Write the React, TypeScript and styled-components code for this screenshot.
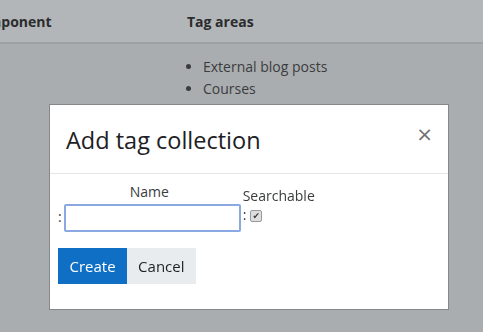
import React from "react";
import styled, {createGlobalStyle} from "styled-components";

const GlobalStyle = createGlobalStyle`
  html, body {
    margin: 0;
    padding: 0;
    background: #aaadaf;
  }
  body {
    font-family: "Open Sans", "Noto Sans", sans-serif;
    color: #2b2d2f;
  }
`;

const Page = styled.div`
  position: relative;
  width: 483px;
  height: 332px;
  overflow: hidden;
  background: #aaadaf;
`;

const Table = styled.table`
  border-collapse: collapse;
  margin-left: -30px;
  width: 600px;
`;

const HeadCell = styled.th<{w: number}>`
  height: 42px;
  padding: 0;
  text-align: left;
  font-size: 14px;
  font-weight: 700;
  color: #2a2c2e;
  background: #b3b6b8;
  border-bottom: 2px solid #9ea1a3;
  width: ${(p) => p.w}px;
`;

const BodyCell = styled.td`
  vertical-align: top;
  padding: 12px 0 0 0;
  font-size: 14px;
`;

const AreaList = styled.ul`
  margin: 0;
  padding-left: 16px;
  line-height: 22px;
  color: #3a3c3e;
`;

const Dialog = styled.div`
  position: absolute;
  left: 49px;
  top: 104px;
  width: 398px;
  background: #fff;
  border: 1px solid #85888a;
`;

const DialogHeader = styled.div`
  display: flex;
  align-items: flex-start;
  justify-content: space-between;
  height: 68px;
  padding: 0 16px;
  border-bottom: 1px solid #e3e5e7;
`;

const Title = styled.h2`
  margin: 19px 0 0 0;
  font-size: 23.5px;
  font-weight: 400;
  color: #1d2125;
`;

const Close = styled.button`
  margin-top: 19px;
  margin-right: -1px;
  border: 0;
  background: none;
  padding: 0;
  font-size: 20px;
  line-height: 1;
  color: #6f7173;
  font-family: "DejaVu Sans", sans-serif;
`;

const DialogBody = styled.div`
  padding: 9px 8px 0 8px;
`;

const FieldRow = styled.div`
  display: flex;
  align-items: flex-start;
  font-size: 14px;
  color: #3a3c3e;
`;

const Field = styled.div<{center?: boolean}>`
  display: flex;
  flex-direction: column;
  align-items: ${(p) => (p.center ? "center" : "flex-start")};
  padding-top: ${(p) => (p.center ? 0 : 4)}px;
  margin-right: ${(p) => (p.center ? 2 : 0)}px;
`;

const Label = styled.label`
  line-height: 18px;
`;

const Inline = styled.div`
  display: flex;
  align-items: center;
  gap: 1px;
`;

const NameInput = styled.input`
  box-sizing: border-box;
  width: 177px;
  height: 28px;
  margin-top: 3px;
  margin-left: 1px;
  border: 2px solid #8aa9e3;
  border-radius: 2px;
  padding: 0 3px;
  font-size: 14px;
  outline: none;
`;

const Check = styled.input`
  appearance: none;
  box-sizing: border-box;
  width: 12px;
  height: 12px;
  margin: 3px 0 0 3px;
  border: 1px solid #9a9a9a;
  border-radius: 2px;
  background: #dedede;
  display: flex;
  align-items: center;
  justify-content: center;
  &:checked::after {
    content: "✔";
    font-family: "DejaVu Sans", sans-serif;
    font-size: 9px;
    line-height: 1;
    color: #3c3c3c;
  }
`;

const Actions = styled.div`
  display: flex;
  padding: 16px 0 25px 0;
`;

const Button = styled.button<{primary?: boolean}>`
  height: 36px;
  border: 0;
  padding: 0 ${(p) => (p.primary ? 11.5 : 11)}px;
  font-size: 15px;
  font-family: "Open Sans", "Noto Sans", sans-serif;
  background: ${(p) => (p.primary ? "#0f6fc5" : "#e9ecef")};
  color: ${(p) => (p.primary ? "#fff" : "#1d2125")};
`;

export default function App() {
  return (
    <Page>
      <GlobalStyle />
      <Table>
        <thead>
          <tr>
            <HeadCell w={217}>Component</HeadCell>
            <HeadCell w={383}>Tag areas</HeadCell>
          </tr>
        </thead>
        <tbody>
          <tr>
            <BodyCell />
            <BodyCell>
              <AreaList>
                <li>External blog posts</li>
                <li>Courses</li>
              </AreaList>
            </BodyCell>
          </tr>
        </tbody>
      </Table>
      <Dialog>
        <DialogHeader>
          <Title>Add tag collection</Title>
          <Close aria-label="Close">×</Close>
        </DialogHeader>
        <DialogBody>
          <FieldRow>
            <Field center>
              <Label htmlFor="name">Name</Label>
              <Inline>
                :<NameInput id="name" autoFocus />
              </Inline>
            </Field>
            <Field>
              <Label htmlFor="searchable">Searchable</Label>
              <Inline>
                :<Check id="searchable" type="checkbox" defaultChecked />
              </Inline>
            </Field>
          </FieldRow>
          <Actions>
            <Button primary>Create</Button>
            <Button>Cancel</Button>
          </Actions>
        </DialogBody>
      </Dialog>
    </Page>
  );
}
